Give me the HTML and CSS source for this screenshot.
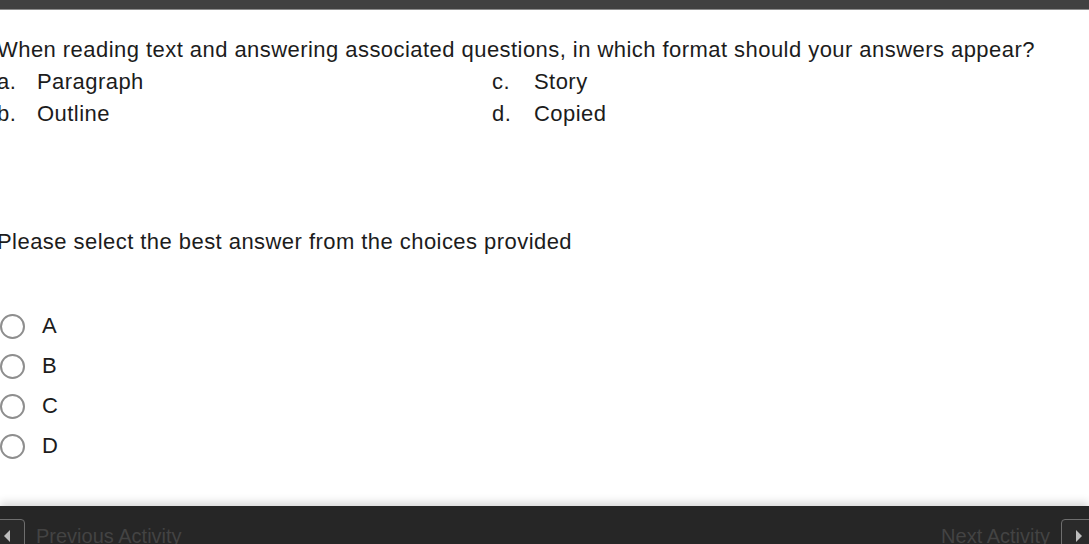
FILE: index.html
```html
<!DOCTYPE html>
<html>
<head>
<meta charset="utf-8">
<link rel="stylesheet" href="styles.css">
</head>
<body>
<div class="topbar"></div>
<main class="content">
  <p class="question">When reading text and answering associated questions, in which format should your answers appear?</p>
  <div class="choices">
    <div class="choice"><span class="letter">a.</span><span>Paragraph</span></div>
    <div class="choice"><span class="letter letter-right">c.</span><span>Story</span></div>
    <div class="choice"><span class="letter">b.</span><span>Outline</span></div>
    <div class="choice"><span class="letter letter-right">d.</span><span>Copied</span></div>
  </div>
  <p class="prompt">Please select the best answer from the choices provided</p>
  <div class="options">
    <label class="option"><span class="radio"></span><span>A</span></label>
    <label class="option"><span class="radio"></span><span>B</span></label>
    <label class="option"><span class="radio"></span><span>C</span></label>
    <label class="option"><span class="radio"></span><span>D</span></label>
  </div>
</main>
<footer class="footer">
  <div class="nav nav-prev">
    <span class="navbtn navbtn-prev"><span class="tri tri-left"></span></span>
    <span class="navtext">Previous Activity</span>
  </div>
  <div class="nav nav-next">
    <span class="navtext">Next Activity</span>
    <span class="navbtn navbtn-next"><span class="tri tri-right"></span></span>
  </div>
</footer>
</body>
</html>
```

FILE: styles.css
```css
html, body {
  margin: 0;
  padding: 0;
  background: #ffffff;
  overflow: hidden;
}
body {
  width: 1089px;
  height: 544px;
  font-family: "Liberation Sans", Arial, Helvetica, sans-serif;
  color: #1c1c1c;
  display: flex;
  flex-direction: column;
}
.topbar {
  height: 9px;
  background: #414141;
  border-bottom: 1px solid #8c8c8c;
  flex: none;
}
.content {
  flex: 1;
  margin-left: -3px;
  padding-top: 24px;
  font-size: 22px;
  letter-spacing: 0.45px;
  line-height: 32px;
}
.question {
  margin: 0;
  white-space: nowrap;
}
.choices {
  display: grid;
  grid-template-columns: 495px 1fr;
}
.choice {
  display: flex;
}
.letter {
  width: 40px;
  flex: none;
}
.letter-right {
  width: 42px;
}
.prompt {
  margin: 96px 0 0 0;
}
.options {
  margin-top: 48px;
  margin-left: 3px;
  display: flex;
  flex-direction: column;
}
.option {
  height: 40px;
  display: flex;
  align-items: center;
  gap: 17px;
}
.radio {
  width: 21px;
  height: 21px;
  border: 2px solid #8e8e8e;
  border-radius: 50%;
  flex: none;
}
.footer {
  flex: none;
  height: 38px;
  background: #262626;
  box-shadow: 0 -4px 8px rgba(0,0,0,0.15);
  display: flex;
  justify-content: space-between;
  align-items: flex-start;
  padding-top: 13px;
  box-sizing: border-box;
  overflow: hidden;
}
.nav {
  display: flex;
  align-items: flex-start;
  gap: 11px;
}
.navbtn {
  width: 34px;
  height: 34px;
  border: 1px solid #6e6e6e;
  border-radius: 4px;
  box-sizing: border-box;
  display: flex;
  align-items: center;
  background: #2a2a2a;
}
.navbtn-prev {
  margin-left: -9px;
  justify-content: flex-end;
  padding-right: 14px;
}
.navbtn-next {
  margin-right: -6px;
  justify-content: flex-start;
  padding-left: 14px;
}
.tri {
  width: 0;
  height: 0;
  border-top: 6px solid transparent;
  border-bottom: 6px solid transparent;
}
.tri-left { border-right: 6px solid #bdbdbd; }
.tri-right { border-left: 6px solid #bdbdbd; }
.navtext {
  color: #434343;
  font-size: 20px;
  line-height: 22px;
  padding-top: 6px;
}
```
